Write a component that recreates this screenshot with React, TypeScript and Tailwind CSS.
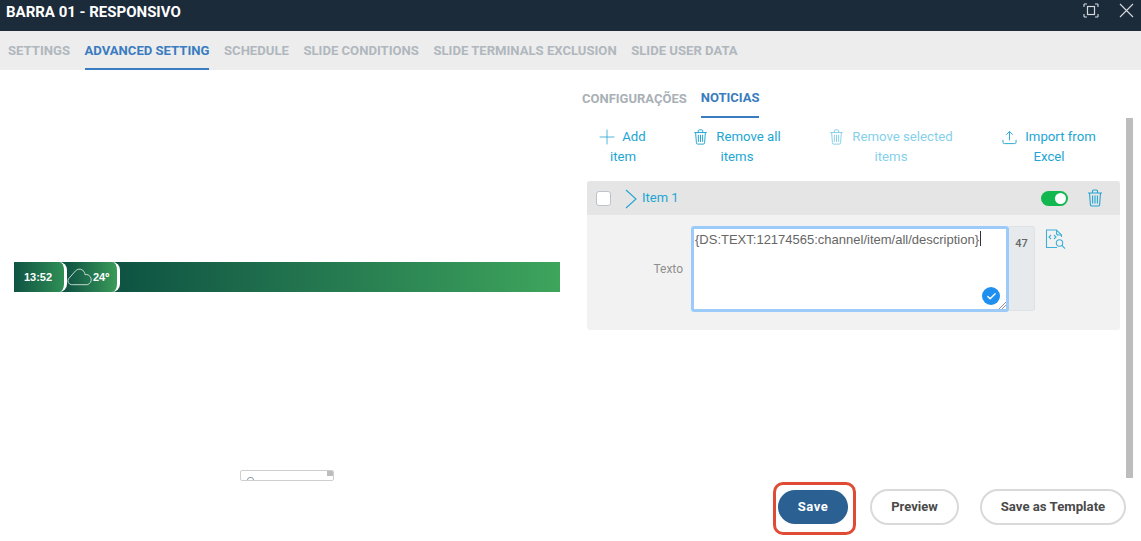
import {Plus, Check} from "lucide-react";

const ROBOTO = "font-['Roboto',sans-serif]";

function TrashIcon({className}: {className?: string}) {
    return (
        <svg viewBox="0 0 16 18" fill="none" stroke="currentColor" strokeWidth="1.1" className={className}>
            <path d="M1 4h14M5.500 4V2a1 1 0 0 1 1-1h3a1 1 0 0 1 1 1v2" />
            <path d="M2.500 4l.9 11.600a1.500 1.500 0 0 0 1.500 1.400h6.200a1.500 1.500 0 0 0 1.500-1.400L13.500 4" />
            <path d="M5.600 6.500v8M8 6.500v8M10.400 6.500v8" />
        </svg>
    );
}

function ExpandIcon() {
    return (
        <svg viewBox="0 0 16 15" fill="none" stroke="#d5dae0" className="h-[15px] w-[16px]">
            <rect x="4.500" y="3.500" width="7" height="8" strokeWidth="1.200" />
            <path d="M1 1h3M1 1v3M15 1h-3M15 1v3M1 14h3M1 14v-3M15 14h-3M15 14v-3" strokeWidth="1.100" />
        </svg>
    );
}

function CloseIcon() {
    return (
        <svg viewBox="0 0 15 15" fill="none" stroke="#d5dae0" strokeWidth="1.100" className="h-[15px] w-[15px]">
            <path d="M1 1l13 13M14 1L1 14" />
        </svg>
    );
}

function UploadIcon() {
    return (
        <svg viewBox="0 0 16 16" fill="none" stroke="currentColor" strokeWidth="1" className="h-[15px] w-[15px]">
            <path d="M8 11V1.500M4.500 5L8 1.500 11.500 5" />
            <path d="M1 10.500v2.500a1.500 1.500 0 0 0 1.500 1.500h11a1.500 1.500 0 0 0 1.500-1.500v-2.500" />
        </svg>
    );
}

function CodeSearchIcon() {
    return (
        <svg viewBox="0 0 21 21" fill="none" stroke="#3fb0d8" strokeWidth="1.100" className="h-[21px] w-[21px]">
            <path d="M12 18.500H1.500V1h10l5 5v2" />
            <path d="M11.500 1v3a2 2 0 0 0 2 2h3" />
            <path d="M6 6L4 8l2 2M9 6l2 2-2 2" />
            <circle cx="14.500" cy="14" r="3.200" />
            <path d="M17 16.500l3 3.200" />
        </svg>
    );
}

function CloudIcon() {
    return (
        <svg viewBox="0 0 26 18" fill="none" stroke="#c9dcd0" strokeWidth="1" className="h-[18px] w-[25px]">
            <path d="M6 17H5a4 4 0 0 1-3.500-6L9 2.500a5.500 5.500 0 0 1 9 1.500c.5 1 .6 1.700.6 2.500a5 5 0 0 1 2.400 10.500z" />
        </svg>
    );
}

function Banner() {
    return (
        <div className="flex h-[30px] w-[546px] bg-gradient-to-r from-[#0f5443] from-20% to-[#3ea55c] font-['Liberation_Sans',sans-serif]">
            <div className="flex h-full w-[53px] items-center justify-center rounded-r-lg border-r-[3px] border-white bg-gradient-to-r from-[#0f5443] to-[#2f8f55] pr-[2px] text-[11px] font-bold text-white">
                13:52
            </div>
            <div className="flex h-full w-[53px] items-center rounded-r-lg border-r-[3px] border-white bg-gradient-to-r from-[#0f5443] to-[#3a9c59] text-[11px] font-bold text-white">
                <CloudIcon />
                <span className="ml-[1px]">24º</span>
            </div>
        </div>
    );
}

type ToolButtonProps = {
    icon: React.ReactNode;
    line1: string;
    line2: string;
    width: string;
    faded?: boolean;
};

function ToolButton({icon, line1, line2, width, faded}: ToolButtonProps) {
    return (
        <div className={`${width} whitespace-nowrap text-center text-[13.2px] leading-[20px] ${faded ? "text-[#85d0ea]" : "text-[#22a5d3]"}`}>
            <div className="flex items-center justify-center gap-2">
                {icon}
                <span>{line1}</span>
            </div>
            <div>{line2}</div>
        </div>
    );
}

export default function App() {
    const tabs = ["SETTINGS", "ADVANCED SETTING", "SCHEDULE", "SLIDE CONDITIONS", "SLIDE TERMINALS EXCLUSION", "SLIDE USER DATA"];

    return (
        <div className={`flex h-[541px] w-[1141px] flex-col overflow-hidden bg-white ${ROBOTO}`}>
            {/* header */}
            <div className="flex h-[31px] shrink-0 items-center justify-between bg-[#1c2b3a] pl-[6px] pr-[7px]">
                <span className="pb-[7px] text-[15px] font-bold text-white">BARRA 01 - RESPONSIVO</span>
                <div className="flex items-center gap-[20px] pb-[10px] text-[#d5dae0]">
                    <ExpandIcon />
                    <CloseIcon />
                </div>
            </div>

            {/* tabs */}
            <div className="flex h-[39px] shrink-0 gap-[14.6px] bg-[#ededed] pl-[8px]">
                {tabs.map((tab) => (
                    <div
                        key={tab}
                        className={`flex h-full items-center border-b-[2px] pt-[2px] text-[13.1px] font-bold ${
                            tab === "ADVANCED SETTING" ? "border-[#3a7cc0] text-[#3a7cc0]" : "border-transparent text-[#b0b7bd]"
                        }`}
                    >
                        {tab}
                    </div>
                ))}
            </div>

            <div className="flex min-h-0 flex-1">
                {/* preview */}
                <div className="w-[582px] shrink-0 pl-[14px] pt-[192px]">
                    <Banner />
                    <div className="relative ml-[226px] mt-[178px] flex h-[11px] w-[94px] justify-end overflow-hidden rounded-[2px] border border-[#cfcfcf]">
                        <div className="h-[5px] w-[6px] bg-[#bdbdbd]" />
                        <div className="absolute bottom-[-3px] left-[6px] h-[6px] w-[7px] rounded-full border border-[#8a9aa5]" />
                    </div>
                </div>

                {/* right panel */}
                <div className="flex min-w-0 flex-1 flex-col">
                    <div className="flex">
                        <div className="min-w-0 flex-1">
                            <div className="flex h-[48px] gap-[14px] text-[13px] font-bold">
                                <div className="flex items-center pt-[10px] text-[#a9b0b6]">CONFIGURAÇÕES</div>
                                <div className="flex items-center border-b-[2px] border-[#3a7cc0] pt-[10px] text-[#3a7cc0]">NOTICIAS</div>
                            </div>

                            <div className="mt-[9px] flex pl-[6px]">
                                <ToolButton width="w-[70px]" icon={<Plus size={24} strokeWidth={0.8} className="-mx-[5px] -my-[5px]" />} line1="Add" line2="item" />
                                <ToolButton width="w-[100px] ml-[29px]" icon={<TrashIcon className="h-[16px] w-[15px]" />} line1="Remove all" line2="items" />
                                <ToolButton width="w-[130px] ml-[39px]" faded icon={<TrashIcon className="h-[16px] w-[15px]" />} line1="Remove selected" line2="items" />
                                <ToolButton width="w-[120px] ml-[33px]" icon={<UploadIcon />} line1="Import from" line2="Excel" />
                            </div>

                            <div className="ml-[5px] mt-[14px] w-[533px] overflow-hidden rounded-[3px] bg-[#f2f2f2]">
                                <div className="flex h-[34px] items-center bg-[#e5e5e5] pl-[9px] pr-[17px]">
                                    <div className="h-[15px] w-[15px] rounded-[3px] border border-[#bcc3ca] bg-white" />
                                    <svg viewBox="0 0 12 20" fill="none" stroke="#22a5d3" strokeWidth="1.100" className="ml-[14px] mr-[5px] mt-[2px] h-[20px] w-[12px]">
                                        <path d="M1 1l10 9-10 9" />
                                    </svg>
                                    <span className="text-[13px] text-[#22a5d3]">Item 1</span>
                                    <div className="ml-auto flex h-[15px] w-[27px] items-center justify-end rounded-full bg-[#12b84f] pr-[2px]">
                                        <div className="h-[11px] w-[11px] rounded-full bg-white" />
                                    </div>
                                    <TrashIcon className="ml-[19px] h-[18px] w-[16px] text-[#22a5d3]" />
                                </div>

                                <div className="flex h-[115px] pt-[11px]">
                                    <div className="flex h-[86px] w-[104px] items-center justify-end pr-[8px] text-[12px] text-[#8f8f8f]">Texto</div>
                                    <div className="relative flex h-[86px] w-[318px] rounded-[3px] border-[3px] border-[#9ccbfa] bg-white">
                                        <div className="flex items-start pl-[1px] pt-[1px] font-['Liberation_Sans',sans-serif] text-[13px] text-[#666666]">
                                            <span>{"{DS:TEXT:12174565:channel/item/all/description}"}</span>
                                            <span className="ml-[1px] mt-[1px] h-[15px] w-px bg-[#333333]" />
                                        </div>
                                        <div className="absolute bottom-[4px] right-[6px] flex h-[18px] w-[18px] items-center justify-center rounded-full bg-[#1f8fef]">
                                            <Check size={11} strokeWidth={3} className="text-white" />
                                        </div>
                                        <svg viewBox="0 0 8 8" stroke="#777777" strokeWidth="0.800" className="absolute bottom-0 right-0 h-[8px] w-[8px]">
                                            <path d="M1 8l7-7M4 8l4-4" />
                                        </svg>
                                    </div>
                                    <div className="flex h-[85px] w-[26px] items-start justify-center rounded-r-[3px] border border-l-0 border-[#dfe2e5] bg-[#e7eaed] pt-[9px] text-[11px] font-medium text-[#666666]">
                                        47
                                    </div>
                                    <div className="ml-[10px] pt-[3px]">
                                        <CodeSearchIcon />
                                    </div>
                                </div>
                            </div>
                        </div>
                        {/* scroll bar */}
                        <div className="ml-[6px] mr-[8px] mt-[48px] h-[360px] w-[7px] bg-[#bdbdbd]" />
                    </div>

                    {/* footer */}
                    <div className="ml-[191px] mt-[4px] flex items-center">
                        <div className="flex h-[53px] w-[83px] items-center rounded-[10px] border-[3px] border-[#e04b35] pb-[4px] pl-[2px]">
                            <button className="h-[34px] w-[70px] rounded-full bg-[#2a6092] text-[13px] font-bold tracking-[0.5px] text-white">Save</button>
                        </div>
                        <button className="mb-[4px] ml-[14px] h-[36px] w-[89px] rounded-full border-2 border-[#d9d9d9] bg-white text-[13px] font-bold text-[#4a4a4a]">Preview</button>
                        <button className="mb-[4px] ml-[21px] h-[36px] w-[146px] rounded-full border-2 border-[#d9d9d9] bg-white text-[13.200px] font-bold text-[#4a4a4a]">Save as Template</button>
                    </div>
                </div>
            </div>
        </div>
    );
}
